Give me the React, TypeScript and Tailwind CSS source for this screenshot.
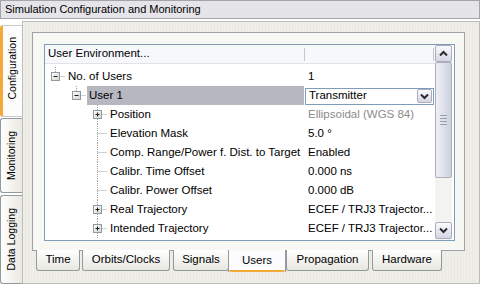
import React from 'react';

type Row = {
  label: string;
  level: number;
  box?: 'plus' | 'minus';
  value: React.ReactNode;
  gray?: boolean;
  selected?: boolean;
};

const Chevron = ({ up = false }: { up?: boolean }) => (
  <svg width="9" height="7" viewBox="0 0 9 7">
    <path
      d={up ? 'M1 5.5 L4.5 2 L8 5.5' : 'M1 1.5 L4.5 5 L8 1.5'}
      fill="none"
      stroke="#2b2b35"
      strokeWidth="2"
    />
  </svg>
);

const XpButton = ({ up = false, className = '' }: { up?: boolean; className?: string }) => (
  <div
    className={`flex items-center justify-center rounded-[2px] border border-[#a9adbd] bg-gradient-to-b from-[#fbfbfd] to-[#d4d7e2] ${className}`}
  >
    <Chevron up={up} />
  </div>
);

const Gutter = ({ level, box }: { level: number; box?: 'plus' | 'minus' }) => {
  const w = 21 + 21 * level;
  const cx = 10.5 + 21 * level;
  const bx = 6.5 + 21 * level;
  return (
    <svg width={w} height="19" className="shrink-0">
      {level === 2 ? (
        <line x1={cx} y1="0" x2={cx} y2="19" stroke="#a3a3a3" strokeDasharray="1 1" />
      ) : (
        <line x1={cx} y1="0" x2={cx} y2="5" stroke="#a3a3a3" strokeDasharray="1 1" />
      )}
      <line x1={cx} y1="9.5" x2={w - 1} y2="9.5" stroke="#a3a3a3" strokeDasharray="1 1" />
      {box && (
        <g>
          <defs>
            <linearGradient id={`bg${level}${box}`} x1="0" y1="0" x2="1" y2="1">
              <stop offset="0" stopColor="#ffffff" />
              <stop offset="1" stopColor="#d4d4cc" />
            </linearGradient>
          </defs>
          <rect x={bx} y="5.5" width="8" height="8" fill={`url(#bg${level}${box})`} stroke="#8e9aa6" />
          <line x1={bx + 2} y1="9.5" x2={bx + 6} y2="9.5" stroke="#1c1c1c" />
          {box === 'plus' && <line x1={bx + 4} y1="7.5" x2={bx + 4} y2="11.5" stroke="#1c1c1c" />}
        </g>
      )}
    </svg>
  );
};

const Dropdown = () => (
  <div className="mt-px flex h-[17px] w-[129px] items-center border border-[#7f9db9] bg-white pl-[3px] pr-px">
    <span className="flex-1">Transmitter</span>
    <XpButton className="h-[14px] w-[15px]" />
  </div>
);

const rows: Row[] = [
  { label: 'No. of Users', level: 0, box: 'minus', value: '1' },
  { label: 'User 1', level: 1, box: 'minus', value: <Dropdown />, selected: true },
  { label: 'Position', level: 2, box: 'plus', value: 'Ellipsoidal (WGS 84)', gray: true },
  { label: 'Elevation Mask', level: 2, value: '5.0 °' },
  { label: 'Comp. Range/Power f. Dist. to Target', level: 2, value: 'Enabled' },
  { label: 'Calibr. Time Offset', level: 2, value: '0.000 ns' },
  { label: 'Calibr. Power Offset', level: 2, value: '0.000 dB' },
  { label: 'Real Trajectory', level: 2, box: 'plus', value: 'ECEF / TRJ3 Trajector...' },
  { label: 'Intended Trajectory', level: 2, box: 'plus', value: 'ECEF / TRJ3 Trajector...' },
];

const bottomTabs = [
  { label: 'Time', cls: 'w-[44px]' },
  { label: 'Orbits/Clocks', cls: 'w-[88px] ml-[2px]' },
  { label: 'Signals', cls: 'w-[56px] ml-[3px]' },
  { label: 'Users', cls: 'w-[58px] -ml-px', active: true },
  { label: 'Propagation', cls: 'w-[83px]' },
  { label: 'Hardware', cls: 'w-[70px] ml-[3px]' },
];

const sideTabs = [
  { label: 'Configuration', cls: 'h-[92px] mt-[4px]', active: true },
  { label: 'Monitoring', cls: 'h-[75px] mt-px' },
  { label: 'Data Logging', cls: 'h-[89px] mt-[2px]' },
];

export default function App() {
  return (
    <div className="h-[285px] w-[480px] overflow-hidden bg-white text-[11.5px] leading-none text-black [font-family:'Liberation_Sans',Arial,sans-serif]">
      {/* title bar */}
      <div className="flex h-[19px] items-center border border-[#a4a4aa] bg-[#e4e4e9] pl-[4px] text-[11px]">
        Simulation Configuration and Monitoring
      </div>

      <div className="mt-[2px] flex h-[263px]">
        {/* vertical tabs */}
        <div className="flex w-[22px] shrink-0 flex-col">
          {sideTabs.map((t) => (
            <div
              key={t.label}
              className={`flex items-center justify-center rounded-l-[3px] border border-r-0 ${
                t.active
                  ? 'border-[#c8c8c8] border-l-[3px] border-l-[#f4a93a] bg-[#fcfcfc] pb-[6px]'
                  : 'border-[#919b9c] bg-gradient-to-r from-[#ffffff] to-[#e9e8e2]'
              } ${t.cls}`}
            >
              <span className="rotate-180 whitespace-nowrap text-[10.5px] [writing-mode:vertical-rl]">{t.label}</span>
            </div>
          ))}
        </div>

        {/* main panel */}
        <div className="flex flex-1 flex-col border border-[#bdbdbd] bg-[repeating-linear-gradient(90deg,#efeee8_0px,#efeee8_2px,#e9e8e1_2px,#e9e8e1_3px)] pl-[9px] pr-[14px] pt-[10px]">
          <div className="flex h-[219px] flex-col border border-[#9ea2a6] bg-[#f7f7f3] pl-[11px] pr-[9px] pt-[11px]">
            {/* grid box */}
            <div className="flex h-[197px] border border-[#7f9db9] bg-white">
              <div className="flex w-[390px] flex-col">
                <div className="flex h-[19px] items-center border-b border-[#e2e3e8] bg-[#f6f8fc]">
                  <div className="w-[259px] pl-[3px]">User Environment...</div>
                  <div className="h-[13px] w-px bg-[#c4c7cf]" />
                  <div className="flex-1" />
                  <div className="h-[13px] w-px bg-[#c4c7cf]" />
                  <div className="w-px" />
                </div>
                <div className="mt-[3px] flex flex-col">
                  {rows.map((r) => (
                    <div key={r.label} className="flex h-[19px]">
                      <div className="flex w-[259px]">
                        <Gutter level={r.level} box={r.box} />
                        <div className={`flex flex-1 items-center pl-[2px] ${r.selected ? 'bg-[#b7b7bf]' : ''}`}>
                          {r.label}
                        </div>
                      </div>
                      <div className={`flex flex-1 items-center ${r.gray ? 'text-[#8c8c8c]' : ''} ${r.selected ? 'pl-px' : 'pl-[4px]'}`}>
                        {r.value}
                      </div>
                    </div>
                  ))}
                </div>
              </div>
              {/* scrollbar */}
              <div className="flex w-[17px] flex-col bg-[#f3f3ef] pb-px">
                <XpButton up className="h-[17px]" />
                <div className="flex-1">
                  <div className="flex h-[116px] flex-col items-center justify-center gap-[2px] rounded-[2px] border border-[#a9adbd] bg-gradient-to-r from-[#eef0f6] to-[#cdd2df]">
                    <div className="h-px w-[7px] bg-[#9aa0b0]" />
                    <div className="h-px w-[7px] bg-[#9aa0b0]" />
                    <div className="h-px w-[7px] bg-[#9aa0b0]" />
                    <div className="h-px w-[7px] bg-[#9aa0b0]" />
                  </div>
                </div>
                <XpButton className="h-[17px]" />
              </div>
            </div>
          </div>

          {/* bottom tabs */}
          <div className="-mt-px ml-[4px] flex items-start">
            {bottomTabs.map((t) =>
              t.active ? (
                <div key={t.label} className={`flex h-[22px] flex-col border-x border-[#919b9c] bg-[#fcfcfe] ${t.cls}`}>
                  <div className="flex flex-1 items-center justify-center pt-px">{t.label}</div>
                  <div className="h-[2px] rounded-b-[2px] bg-[#f4a93a]" />
                </div>
              ) : (
                <div
                  key={t.label}
                  className={`flex h-[21px] items-center justify-center rounded-b-[3px] border border-t-0 border-[#919b9c] bg-gradient-to-b from-[#ffffff] to-[#e8e7e0] ${t.cls}`}
                >
                  {t.label}
                </div>
              )
            )}
          </div>
        </div>
      </div>
    </div>
  );
}
